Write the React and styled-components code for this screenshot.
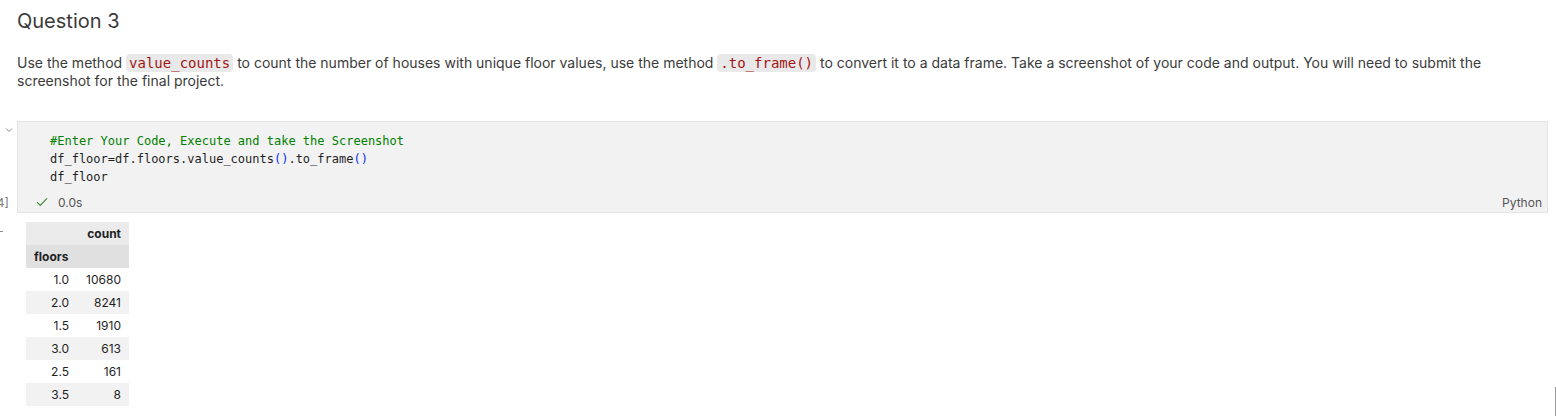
import React from "react";
import styled, { createGlobalStyle } from "styled-components";

const GlobalStyle = createGlobalStyle`
  body {
    margin: 0;
    background: #ffffff;
    font-family: Inter, "Liberation Sans", sans-serif;
    color: #3b3b3b;
  }
`;

const Notebook = styled.div`
  position: relative;
  width: 1556px;
  height: 416px;
  overflow: hidden;
`;

const Markdown = styled.div`
  padding: 0 8px 0 17px;
`;

const Title = styled.h2`
  margin: 0;
  padding-top: 8px;
  font-size: 20px;
  font-weight: 400;
  line-height: 26px;
  color: #3b3b3b;
`;

const Para = styled.p`
  margin: 20px 0 0;
  font-size: 14px;
  line-height: 18px;
  color: #3b3b3b;
`;

const InlineCode = styled.code`
  font-family: "DejaVu Sans Mono", monospace;
  font-size: 14px;
  line-height: 18px;
  color: #a31515;
  background: #e9e9e9;
  border-radius: 4px;
  padding: 1px 3px;
`;

const CellRow = styled.div`
  display: flex;
  margin-top: 31px;
`;

const Gutter = styled.div`
  width: 17px;
  flex-shrink: 0;
  display: flex;
  flex-direction: column;
  justify-content: space-between;
  align-items: flex-end;
`;

const Chevron = styled.svg`
  margin: 6px 4px 0 0;
  width: 8px;
  height: 6px;
`;

const ExecCount = styled.div`
  font-size: 12px;
  line-height: 20px;
  color: #7a7a7a;
  padding-right: 8px;
  white-space: nowrap;
`;

const CellBox = styled.div`
  flex: 1;
  margin-right: 8px;
  background: #f2f2f2;
  border: 1px solid #e4e4e4;
`;

const Code = styled.pre`
  margin: 0;
  padding: 10px 0 0 32px;
  font-family: "DejaVu Sans Mono", monospace;
  font-size: 12px;
  line-height: 18px;
  color: #1f1f1f;
`;

const Token = styled.span`
  color: ${(p) => p.$color};
`;

const Status = styled.div`
  display: flex;
  align-items: center;
  height: 20px;
  margin-top: 6px;
  padding: 0 5px 0 18px;
  font-size: 12px;
  color: #555555;
`;

const Elapsed = styled.span`
  margin-left: 10px;
`;

const Lang = styled.span`
  margin-left: auto;
`;

const OutputRow = styled.div`
  display: flex;
  margin-top: 9px;
`;

const OutGutter = styled.div`
  width: 17px;
  flex-shrink: 0;
  padding-top: 9px;
`;

const Dash = styled.div`
  width: 3px;
  height: 1px;
  background: #8a8a8a;
`;

const Table = styled.table`
  margin-left: 9px;
  border-collapse: collapse;
  font-size: 12px;
  color: #1f1f1f;
`;

const Row = styled.tr`
  height: 23px;
  background: ${(p) => p.$bg || "transparent"};
`;

const Head = styled.th`
  padding: 0 8px;
  font-weight: 700;
  text-align: ${(p) => p.$align || "right"};
  min-width: ${(p) => p.$w || 0}px;
`;

const Cell = styled.td`
  padding: 0 8px;
  text-align: right;
`;

const ScrollMark = styled.div`
  position: absolute;
  right: 0;
  bottom: 0;
  width: 1px;
  height: 29px;
  background: #9a9a9a;
`;

const rows = [
  ["1.0", "10680"],
  ["2.0", "8241"],
  ["1.5", "1910"],
  ["3.0", "613"],
  ["2.5", "161"],
  ["3.5", "8"],
];

function CheckIcon() {
  return (
    <svg width="12" height="10" viewBox="0 0 12 10">
      <path d="M1 5.2 L4.2 8.4 L11 1.4" fill="none" stroke="#388a34" strokeWidth="1.1" />
    </svg>
  );
}

export default function App() {
  return (
    <>
      <GlobalStyle />
      <Notebook>
        <Markdown>
          <Title>Question 3</Title>
          <Para>
            Use the method <InlineCode>value_counts</InlineCode> to count the number of houses with
            unique floor values, use the method <InlineCode>.to_frame()</InlineCode> to convert it to
            a data frame. Take a screenshot of your code and output. You will need to submit the
            screenshot for the final project.
          </Para>
        </Markdown>

        <CellRow>
          <Gutter>
            <Chevron viewBox="0 0 8 6">
              <path d="M1 1.5 L4 4.5 L7 1.5" fill="none" stroke="#8a8a8a" strokeWidth="1" />
            </Chevron>
            <ExecCount>[4]</ExecCount>
          </Gutter>
          <CellBox>
            <Code>
              <Token $color="#008000">#Enter Your Code, Execute and take the Screenshot</Token>
              {"\n"}df_floor=df.floors.value_counts<Token $color="#0431fa">()</Token>.to_frame
              <Token $color="#0431fa">()</Token>
              {"\n"}df_floor
            </Code>
            <Status>
              <CheckIcon />
              <Elapsed>0.0s</Elapsed>
              <Lang>Python</Lang>
            </Status>
          </CellBox>
        </CellRow>

        <OutputRow>
          <OutGutter>
            <Dash />
          </OutGutter>
          <Table>
            <thead>
              <Row $bg="#ebebeb">
                <Head $w={35}></Head>
                <Head $w={36}>count</Head>
              </Row>
              <Row $bg="#e0e0e0">
                <Head $align="left">floors</Head>
                <Head></Head>
              </Row>
            </thead>
            <tbody>
              {rows.map(([idx, val], i) => (
                <Row key={idx} $bg={i % 2 ? "#f2f2f2" : "#ffffff"}>
                  <Cell>{idx}</Cell>
                  <Cell>{val}</Cell>
                </Row>
              ))}
            </tbody>
          </Table>
        </OutputRow>
        <ScrollMark />
      </Notebook>
    </>
  );
}
